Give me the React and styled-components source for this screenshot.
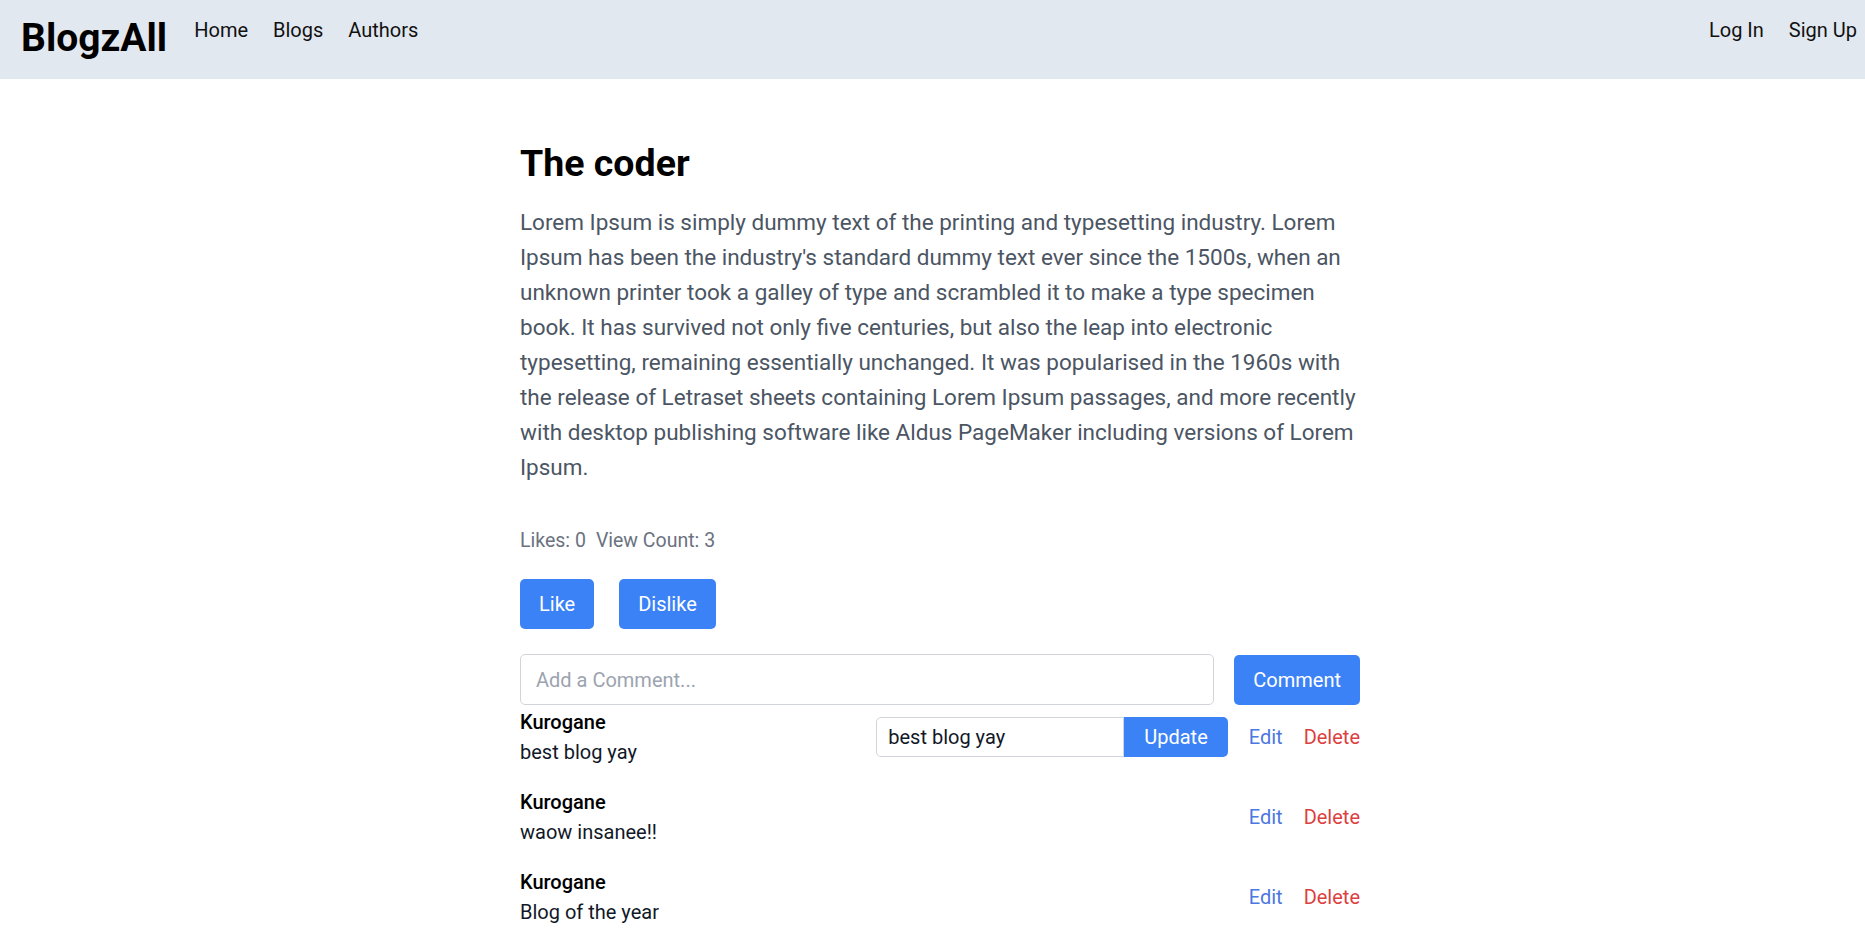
import React from 'react';
import styled, { createGlobalStyle } from 'styled-components';

const GlobalStyle = createGlobalStyle`
  body {
    margin: 0;
    font-family: Roboto, "Noto Sans", sans-serif;
    background: #fff;
    color: #000;
  }
  * { box-sizing: border-box; }
`;

const Nav = styled.nav`
  display: flex;
  align-items: flex-start;
  justify-content: space-between;
  height: 79px;
  padding: 15px 8px 0 21px;
  background: #e2e8f0;
`;

const NavGroup = styled.div`
  display: flex;
  align-items: flex-start;
  gap: 25px;
`;

const Logo = styled.a`
  font-size: 39px;
  line-height: 45px;
  font-weight: 700;
  color: #000;
  text-decoration: none;
  margin-top: 1px;
  margin-right: 2px;
`;

const NavLink = styled.a`
  font-size: 20px;
  line-height: 30px;
  color: #111;
  text-decoration: none;
  cursor: pointer;
`;

const Main = styled.main`
  padding: 62px 0 40px 15px;
`;

const Article = styled.div`
  max-width: 840px;
  margin: 0 auto;
`;

const Title = styled.h1`
  margin: 0;
  font-size: 37.5px;
  line-height: 45px;
  font-weight: 700;
`;

const Body = styled.p`
  margin: 19px 0 0;
  font-size: 22.5px;
  line-height: 35px;
  color: #4b5563;
`;

const Stats = styled.div`
  margin-top: 41px;
  font-size: 19.5px;
  line-height: 30px;
  color: #6b7280;
  display: flex;
  gap: 10px;
`;

const Actions = styled.div`
  display: flex;
  gap: 25px;
  margin-top: 23px;
`;

const Button = styled.button`
  height: ${p => (p.$small ? '40px' : '50px')};
  padding: 0 ${p => (p.$small ? '20px' : '19px')};
  border: 0;
  border-radius: ${p => (p.$attached ? '0 5px 5px 0' : '5px')};
  background: #3b82f6;
  color: #fff;
  font-family: inherit;
  font-size: 20px;
  cursor: pointer;
`;

const CommentForm = styled.div`
  display: flex;
  align-items: center;
  gap: 20px;
  margin-top: 25px;
`;

const Input = styled.input`
  flex: ${p => (p.$grow ? 1 : 'none')};
  width: ${p => (p.$grow ? 'auto' : '248px')};
  height: ${p => (p.$grow ? '51px' : '40px')};
  padding: 0 ${p => (p.$grow ? '15px' : '11px')};
  border: 1px solid #d1d5db;
  border-radius: ${p => (p.$grow ? '5px' : '5px 0 0 5px')};
  font-family: inherit;
  font-size: 20px;
  color: #111827;
  outline: none;
  &::placeholder { color: #9ca3af; }
`;

const CommentList = styled.div`
  display: flex;
  flex-direction: column;
  gap: 20px;
  margin-top: 2px;
`;

const CommentRow = styled.div`
  display: flex;
  align-items: center;
  justify-content: space-between;
`;

const Author = styled.div`
  font-size: 20px;
  line-height: 30px;
  font-weight: 500;
  color: #000;
`;

const CommentText = styled.div`
  font-size: 20px;
  line-height: 30px;
  color: #111827;
`;

const CommentTools = styled.div`
  display: flex;
  align-items: center;
`;

const EditBox = styled.div`
  display: flex;
  margin-right: 21px;
`;

const TextLink = styled.a`
  font-size: 20px;
  line-height: 30px;
  color: ${p => (p.$danger ? '#dc3f3f' : '#4a77e0')};
  margin-left: ${p => (p.$danger ? '21px' : '0')};
  cursor: pointer;
`;

const comments = [
  { id: 1, author: 'Kurogane', text: 'best blog yay', editing: true },
  { id: 2, author: 'Kurogane', text: 'waow insanee!!' },
  { id: 3, author: 'Kurogane', text: 'Blog of the year' },
];

const body =
  "Lorem Ipsum is simply dummy text of the printing and typesetting industry. Lorem Ipsum has been the industry's standard dummy text ever since the 1500s, when an unknown printer took a galley of type and scrambled it to make a type specimen book. It has survived not only five centuries, but also the leap into electronic typesetting, remaining essentially unchanged. It was popularised in the 1960s with the release of Letraset sheets containing Lorem Ipsum passages, and more recently with desktop publishing software like Aldus PageMaker including versions of Lorem Ipsum.";

export default function App() {
  return (
    <>
      <GlobalStyle />
      <Nav>
        <NavGroup>
          <Logo>BlogzAll</Logo>
          <NavLink>Home</NavLink>
          <NavLink>Blogs</NavLink>
          <NavLink>Authors</NavLink>
        </NavGroup>
        <NavGroup>
          <NavLink>Log In</NavLink>
          <NavLink>Sign Up</NavLink>
        </NavGroup>
      </Nav>
      <Main>
        <Article>
          <Title>The coder</Title>
          <Body>{body}</Body>
          <Stats>
            <span>Likes: 0</span>
            <span>View Count: 3</span>
          </Stats>
          <Actions>
            <Button>Like</Button>
            <Button>Dislike</Button>
          </Actions>
          <CommentForm>
            <Input $grow placeholder="Add a Comment..." />
            <Button>Comment</Button>
          </CommentForm>
          <CommentList>
            {comments.map(c => (
              <CommentRow key={c.id}>
                <div>
                  <Author>{c.author}</Author>
                  <CommentText>{c.text}</CommentText>
                </div>
                <CommentTools>
                  {c.editing && (
                    <EditBox>
                      <Input defaultValue={c.text} />
                      <Button $small $attached>Update</Button>
                    </EditBox>
                  )}
                  <TextLink>Edit</TextLink>
                  <TextLink $danger>Delete</TextLink>
                </CommentTools>
              </CommentRow>
            ))}
          </CommentList>
        </Article>
      </Main>
    </>
  );
}
